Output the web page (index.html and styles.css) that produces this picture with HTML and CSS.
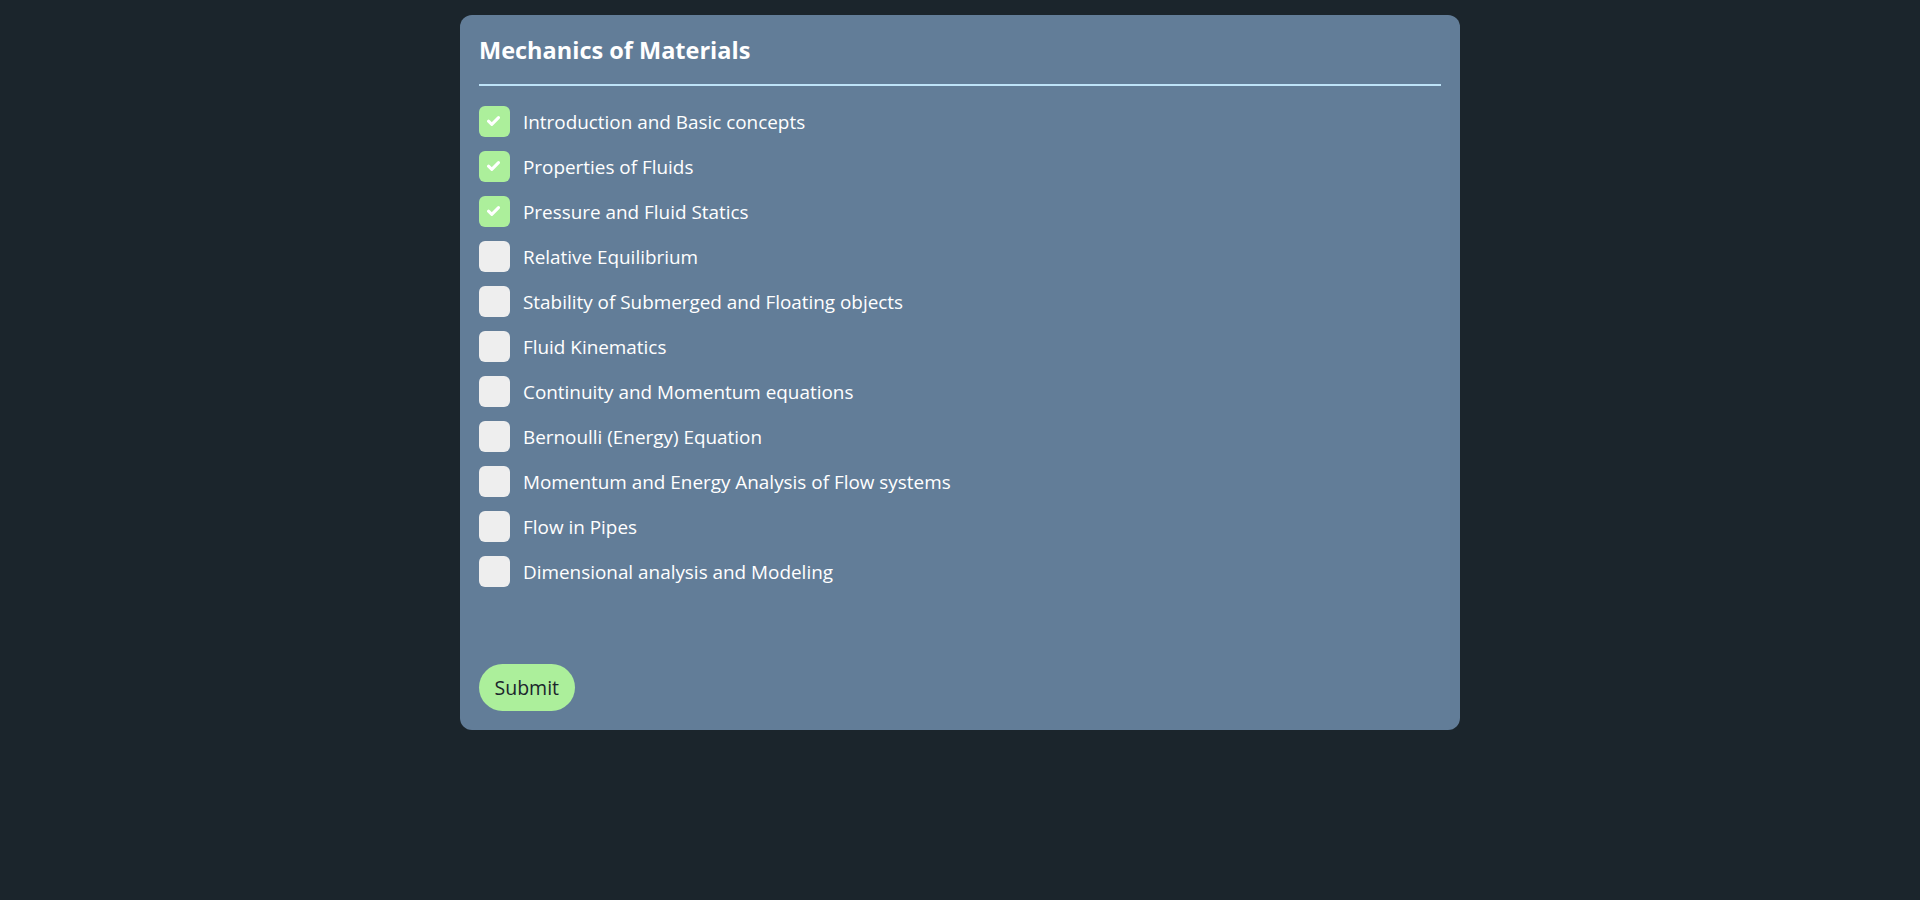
FILE: index.html
```html
<!DOCTYPE html>
<html lang="en">
<head>
<meta charset="utf-8">
<title>Mechanics of Materials</title>
<link rel="stylesheet" href="styles.css">
</head>
<body>
<main class="card">
  <h2 class="title">Mechanics of Materials</h2>
  <ul class="topics">
    <li class="topic"><span class="box checked"><svg viewBox="0 0 13 10" class="tick"><path d="M1.5 5.2 L4.8 8.4 L11.5 1.6" /></svg></span><span class="label">Introduction and Basic concepts</span></li>
    <li class="topic"><span class="box checked"><svg viewBox="0 0 13 10" class="tick"><path d="M1.5 5.2 L4.8 8.4 L11.5 1.6" /></svg></span><span class="label">Properties of Fluids</span></li>
    <li class="topic"><span class="box checked"><svg viewBox="0 0 13 10" class="tick"><path d="M1.5 5.2 L4.8 8.4 L11.5 1.6" /></svg></span><span class="label">Pressure and Fluid Statics</span></li>
    <li class="topic"><span class="box"></span><span class="label">Relative Equilibrium</span></li>
    <li class="topic"><span class="box"></span><span class="label">Stability of Submerged and Floating objects</span></li>
    <li class="topic"><span class="box"></span><span class="label">Fluid Kinematics</span></li>
    <li class="topic"><span class="box"></span><span class="label">Continuity and Momentum equations</span></li>
    <li class="topic"><span class="box"></span><span class="label">Bernoulli (Energy) Equation</span></li>
    <li class="topic"><span class="box"></span><span class="label">Momentum and Energy Analysis of Flow systems</span></li>
    <li class="topic"><span class="box"></span><span class="label">Flow in Pipes</span></li>
    <li class="topic"><span class="box"></span><span class="label">Dimensional analysis and Modeling</span></li>
  </ul>
  <button class="submit" type="button">Submit</button>
</main>
</body>
</html>
```
FILE: styles.css
```css
* { box-sizing: border-box; }
body {
  margin: 0;
  background: #1b252c;
  font-family: "Open Sans", "Noto Sans", sans-serif;
}
.card {
  width: 1000px;
  margin: 15px auto 0;
  padding: 19px 19px 19px;
  background: #627d98;
  border-radius: 12px;
  display: flex;
  flex-direction: column;
  align-items: flex-start;
}
.title {
  align-self: stretch;
  margin: 0;
  padding: 0 0 17px;
  font-size: 23.5px;
  line-height: 33px;
  font-weight: 700;
  color: #ffffff;
  border-bottom: 2px solid #bee3f8;
}
.topics {
  list-style: none;
  margin: 20px 0 0;
  padding: 0;
  display: flex;
  flex-direction: column;
  gap: 14px;
}
.topic {
  display: flex;
  align-items: center;
  gap: 13px;
  height: 31px;
}
.box {
  width: 31px;
  height: 31px;
  border-radius: 6px;
  background: #eeeeee;
  display: flex;
  align-items: center;
  justify-content: center;
}
.box.checked { background: #acef9b; }
.tick {
  width: 13px;
  height: 10px;
  margin: -1px 0 0 -2px;
  fill: none;
  stroke: #ffffff;
  stroke-width: 3;
  stroke-linecap: round;
  stroke-linejoin: round;
}
.label {
  font-size: 18.9px;
  color: #ffffff;
}
.submit {
  margin-top: 77px;
  height: 47px;
  padding: 0 15.5px;
  border: none;
  border-radius: 24px;
  background: #acef9b;
  color: #1b252c;
  font-family: "Open Sans", "Noto Sans", sans-serif;
  font-size: 19.5px;
}
```
